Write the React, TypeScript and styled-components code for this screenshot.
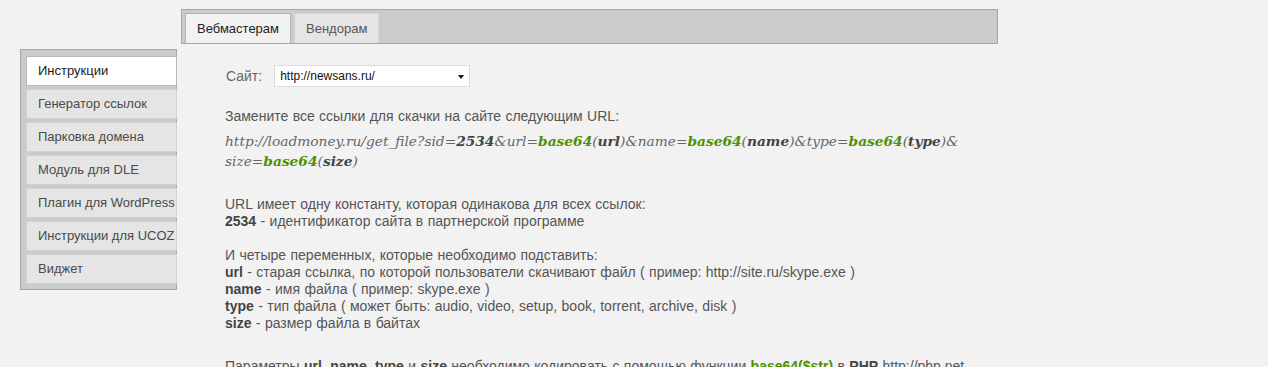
import React from 'react';
import styled, { createGlobalStyle } from 'styled-components';

const GlobalStyle = createGlobalStyle`
  html, body {
    margin: 0;
    padding: 0;
    background: #f2f2f2;
    overflow: hidden;
  }
  body {
    font-family: "Liberation Sans", Arial, sans-serif;
    font-size: 13px;
    color: #555;
  }
`;

const Page = styled.div`
  display: flex;
  align-items: flex-start;
  padding-left: 20px;
`;

const Sidebar = styled.div`
  margin-top: 49px;
  width: 150px;
  background: #cbcbcb;
  border: 1px solid #a6a6a6;
  padding: 6px 0 5px 5px;
  display: flex;
  flex-direction: column;
  gap: 3px;
`;

const SideItem = styled.div<{ $active?: boolean }>`
  height: 28px;
  line-height: 28px;
  padding-left: 11px;
  margin-right: -1px;
  white-space: nowrap;
  overflow: hidden;
  background: ${(p) => (p.$active ? '#ffffff' : '#e5e5e5')};
  border: 1px solid ${(p) => (p.$active ? '#b9b9b9' : '#d2d2d2')};
  color: ${(p) => (p.$active ? '#222' : '#4a4a4a')};
`;

const Main = styled.div`
  margin-left: 4px;
  margin-top: 9px;
  width: 817px;
`;

const TabBar = styled.div`
  height: 30px;
  background: #cbcbcb;
  border: 1px solid #a6a6a6;
  padding: 3px 0 0 3px;
  display: flex;
  align-items: flex-end;
  gap: 3px;
`;

const Tab = styled.div<{ $active?: boolean }>`
  height: 29px;
  line-height: 30px;
  padding: 0 11px;
  background: ${(p) => (p.$active ? '#f2f2f2' : '#e5e5e5')};
  border: 1px solid ${(p) => (p.$active ? '#b4b4b4' : '#d6d6d6')};
  border-bottom: none;
  color: ${(p) => (p.$active ? '#222' : '#555')};
`;

const Content = styled.div`
  padding: 21px 0 0 44px;
  font-size: 14px;
`;

const SiteRow = styled.div`
  display: flex;
  align-items: center;
  gap: 12px;
  height: 22px;
  padding-left: 1px;
  color: #666;
`;

const Select = styled.div`
  position: relative;
  width: 189px;
  height: 20px;
  line-height: 20px;
  padding-left: 5px;
  background: #fff;
  border: 1px solid #dadada;
  color: #111;
  font-size: 12px;
`;

const Arrow = styled.span`
  position: absolute;
  right: 5px;
  top: 9px;
  width: 0;
  height: 0;
  border-left: 3.5px solid transparent;
  border-right: 3.5px solid transparent;
  border-top: 4px solid #111;
`;

const Para = styled.div<{ $top: number }>`
  margin-top: ${(p) => p.$top}px;
  line-height: 17px;
  white-space: nowrap;
  word-spacing: 0.5px;
`;

const UrlLine = styled.div`
  margin-top: 6px;
  font-family: "DejaVu Serif", Georgia, serif;
  font-style: italic;
  font-size: 13.75px;
  line-height: 20px;
  color: #666;
  white-space: nowrap;
`;

const B = styled.b`
  color: #444;
`;

const Green = styled.b`
  color: #4f9000;
`;

export default function App() {
  return (
    <>
      <GlobalStyle />
      <Page>
        <Sidebar>
          <SideItem $active>Инструкции</SideItem>
          <SideItem>Генератор ссылок</SideItem>
          <SideItem>Парковка домена</SideItem>
          <SideItem>Модуль для DLE</SideItem>
          <SideItem>Плагин для WordPress</SideItem>
          <SideItem>Инструкции для UCOZ</SideItem>
          <SideItem>Виджет</SideItem>
        </Sidebar>
        <Main>
          <TabBar>
            <Tab $active>Вебмастерам</Tab>
            <Tab>Вендорам</Tab>
          </TabBar>
          <Content>
            <SiteRow>
              <span>Сайт:</span>
              <Select>
                http://newsans.ru/
                <Arrow />
              </Select>
            </SiteRow>
            <Para $top={21}>Замените все ссылки для скачки на сайте следующим URL:</Para>
            <UrlLine>
              http://loadmoney.ru/get_file?sid=<B>2534</B>&amp;url=<Green>base64</Green>(<B>url</B>)&amp;name=<Green>base64</Green>(<B>name</B>)&amp;type=<Green>base64</Green>(<B>type</B>)&amp;
              <br />
              size=<Green>base64</Green>(<B>size</B>)
            </UrlLine>
            <Para $top={25}>
              URL имеет одну константу, которая одинакова для всех ссылок:
              <br />
              <B>2534</B> - идентификатор сайта в партнерской программе
            </Para>
            <Para $top={17}>
              И четыре переменных, которые необходимо подставить:
              <br />
              <B>url</B> - старая ссылка, по которой пользователи скачивают файл ( пример: http://site.ru/skype.exe )
              <br />
              <B>name</B> - имя файла ( пример: skype.exe )
              <br />
              <B>type</B> - тип файла ( может быть: audio, video, setup, book, torrent, archive, disk )
              <br />
              <B>size</B> - размер файла в байтах
            </Para>
            <Para $top={26}>
              Параметры <B>url</B>, <B>name</B>, <B>type</B> и <B>size</B> необходимо кодировать с помощью функции <Green>base64($str)</Green> в <B>PHP</B> http://php.net
            </Para>
          </Content>
        </Main>
      </Page>
    </>
  );
}
